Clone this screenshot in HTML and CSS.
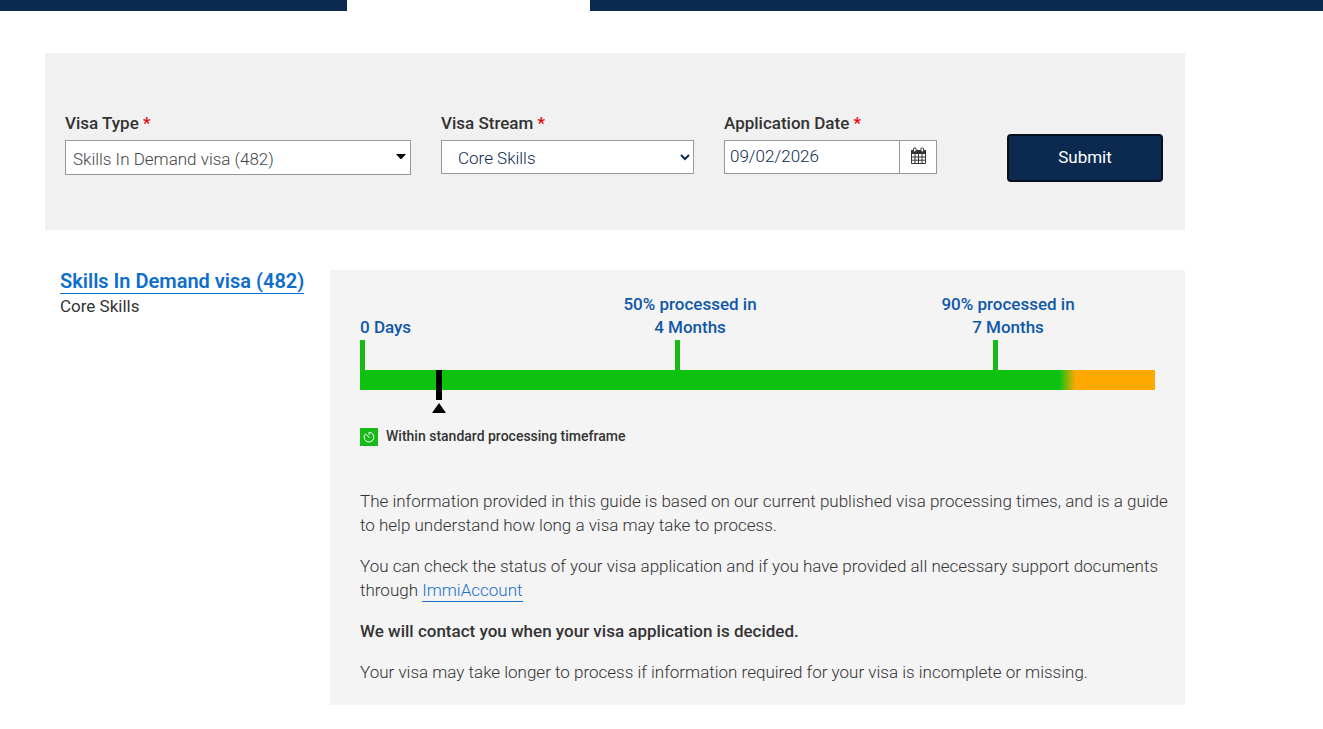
FILE: index.html
```html
<!DOCTYPE html>
<html lang="en">
<head>
  <meta charset="utf-8">
  <title>Visa processing time guide</title>
  <link rel="stylesheet" href="styles.css">
</head>
<body>
  <header class="topbar"><div class="topbar-tab"></div></header>

  <main class="page">
    <form class="search">
      <div class="field">
        <label class="field-label" for="visa-type">Visa Type <span class="required">*</span></label>
        <div class="combo">
          <select class="control control-type" id="visa-type">
            <option>Skills In Demand visa (482)</option>
          </select>
          <svg class="combo-arrow" viewBox="0 0 10 5" aria-hidden="true"><path d="M0 0H10L6 4.5Q5 5.3 4 4.5Z"/></svg>
        </div>
      </div>

      <div class="field">
        <label class="field-label" for="visa-stream">Visa Stream <span class="required">*</span></label>
        <select class="control control-stream" id="visa-stream">
          <option>Core Skills</option>
        </select>
      </div>

      <div class="field">
        <label class="field-label" for="application-date">Application Date <span class="required">*</span></label>
        <div class="date">
          <input class="control control-date" id="application-date" type="text" value="09/02/2026">
          <button class="date-button" type="button" aria-label="Choose date">
            <svg class="calendar" viewBox="0 0 17 18" aria-hidden="true">
              <path class="calendar-fill" d="M1 3h15v4H1z"/>
              <path class="calendar-grid" d="M1.500 6v10.500h14V6M5 7v9.500M8.500 7v9.500M12 7v9.500M1.500 10h14M1.500 13.200h14"/>
              <rect class="calendar-ring" x="3.500" y="0.800" width="2.600" height="4.200" rx="1.300"/>
              <rect class="calendar-ring" x="10.900" y="0.800" width="2.600" height="4.200" rx="1.300"/>
            </svg>
          </button>
        </div>
      </div>

      <button class="submit" type="submit">Submit</button>
    </form>

    <section class="result">
      <div class="visa">
        <a class="visa-link" href="#">Skills In Demand visa (482)</a>
        <div class="visa-stream">Core Skills</div>
      </div>

      <div class="panel">
        <div class="timeline">
          <div class="milestones">
            <div class="milestone milestone-start">
              <div class="milestone-label">0 Days</div>
              <div class="tick"></div>
            </div>
            <div class="milestone">
              <div class="milestone-label">50% processed in<br>4 Months</div>
              <div class="tick"></div>
            </div>
            <div class="milestone">
              <div class="milestone-label">90% processed in<br>7 Months</div>
              <div class="tick"></div>
            </div>
          </div>
          <div class="bar">
            <div class="marker">
              <div class="marker-line"></div>
              <svg class="marker-arrow" viewBox="0 0 14 10" aria-hidden="true"><path d="M7 0L14 10H0Z"/></svg>
            </div>
          </div>
        </div>

        <div class="legend">
          <svg class="legend-icon" viewBox="0 0 18 18" aria-hidden="true">
            <rect class="legend-back" width="18" height="18"/>
            <path class="legend-clock" d="M9 6.500V4.200A4.900 4.900 0 1 1 5.200 5.900M9.200 9.600L6.500 6.600"/>
          </svg>
          <span>Within standard processing timeframe</span>
        </div>

        <p>The information provided in this guide is based on our current published visa processing times, and is a guide to help understand how long a visa may take to process.</p>
        <p>You can check the status of your visa application and if you have provided all necessary support documents through <a class="text-link" href="#">ImmiAccount</a></p>
        <p><strong>We will contact you when your visa application is decided.</strong></p>
        <p>Your visa may take longer to process if information required for your visa is incomplete or missing.</p>
      </div>
    </section>
  </main>
</body>
</html>
```

FILE: styles.css
```css
* {
  box-sizing: border-box;
}

body {
  margin: 0;
  background: #fff;
  color: #333;
  font: 300 17px/24px Roboto, "Liberation Sans", sans-serif;
}

.topbar {
  height: 11px;
  padding-left: 347px;
  background: #0c2a50;
}

.topbar-tab {
  width: 243px;
  height: 100%;
  background: #fff;
}

.page {
  max-width: 1140px;
  margin: 42px 45px 24px;
}

.search {
  display: grid;
  grid-template-columns: 346fr 253fr 213fr 196px;
  column-gap: 30px;
  align-items: start;
  padding: 58px 22px 48px 20px;
  background: #f1f1f1;
}

.field-label {
  display: block;
  margin-bottom: 5px;
  font-weight: 500;
}

.required {
  color: #e00;
}

.control {
  display: block;
  width: 100%;
  height: 34px;
  border: 1px solid #999;
  border-radius: 0;
  background: #fff;
  color: #0c2a50;
  font: inherit;
}

.combo {
  position: relative;
}

.control-type {
  height: 35px;
  padding: 2px 24px 0 7px;
  appearance: none;
  color: #444;
}

.combo-arrow {
  position: absolute;
  top: 14px;
  right: 5px;
  width: 10px;
  height: 5px;
  pointer-events: none;
}

.control-stream {
  padding: 2px 0 0 12px;
}

.date {
  display: flex;
}

.control-date {
  flex: 1;
  min-width: 0;
  padding: 0 5px 2px;
}

.date-button {
  width: 38px;
  margin-left: -1px;
  padding: 0 0 2px;
  border: 1px solid #999;
  background: #fff;
}

.calendar {
  display: block;
  width: 17px;
  height: 18px;
  margin: 0 auto;
}

.calendar-fill {
  fill: #333;
}

.calendar-grid {
  fill: none;
  stroke: #333;
}

.calendar-ring {
  fill: #fff;
  stroke: #333;
}

.submit {
  height: 48px;
  margin: 23px 0 0 40px;
  padding: 0 0 2px;
  border: 2px solid #06101e;
  border-radius: 4px;
  background: #0c2a50;
  color: #fff;
  font: 400 17px/24px Roboto, "Liberation Sans", sans-serif;
}

.result {
  display: grid;
  grid-template-columns: 285px 1fr;
  margin-top: 40px;
}

.visa {
  padding-left: 15px;
  font-weight: 400;
}

.visa-link {
  display: inline-block;
  border-bottom: 1px solid;
  color: #0f6ecd;
  font-weight: 600;
  font-size: 20px;
  line-height: 23px;
  text-decoration: none;
}

.panel {
  padding: 23px 16px 21px 30px;
  background: #f4f4f4;
}

.timeline {
  margin-right: 14px;
}

.milestones {
  display: grid;
  grid-template-columns: 40% 40% 20%;
  align-items: end;
}

.milestone-label {
  width: 160px;
  margin: 0 0 1px -68px;
  color: #0f58a8;
  font-weight: 500;
  line-height: 23px;
  text-align: center;
}

.tick {
  width: 5px;
  height: 30px;
  margin-left: -3px;
  background: #16b916;
}

.milestone-start .milestone-label {
  margin-left: 0;
  text-align: left;
}

.milestone-start .tick {
  margin-left: 0;
}

.bar {
  position: relative;
  height: 20px;
  background: linear-gradient(to right, #0fc20f 88%, #ffa800 90%);
}

.marker {
  position: absolute;
  top: 0;
  left: 10%;
  width: 14px;
  margin-left: -8px;
}

.marker-line {
  width: 6px;
  height: 30px;
  margin: 0 auto 3px;
  background: #000;
}

.marker-arrow {
  display: block;
  width: 14px;
  height: 10px;
}

.legend {
  display: flex;
  gap: 8px;
  margin: 38px 0 43px;
  font-weight: 500;
  font-size: 14px;
  line-height: 17px;
}

.legend-icon {
  width: 18px;
  height: 18px;
}

.legend-back {
  fill: #16b916;
}

.legend-clock {
  fill: none;
  stroke: #fff;
  stroke-linecap: round;
}

p {
  margin: 0 0 17px;
}

p:last-child {
  margin-bottom: 0;
}

strong {
  font-weight: 500;
}

.text-link {
  display: inline-block;
  border-bottom: 1px solid;
  color: #1a70c8;
  line-height: 21px;
  text-decoration: none;
}
```
